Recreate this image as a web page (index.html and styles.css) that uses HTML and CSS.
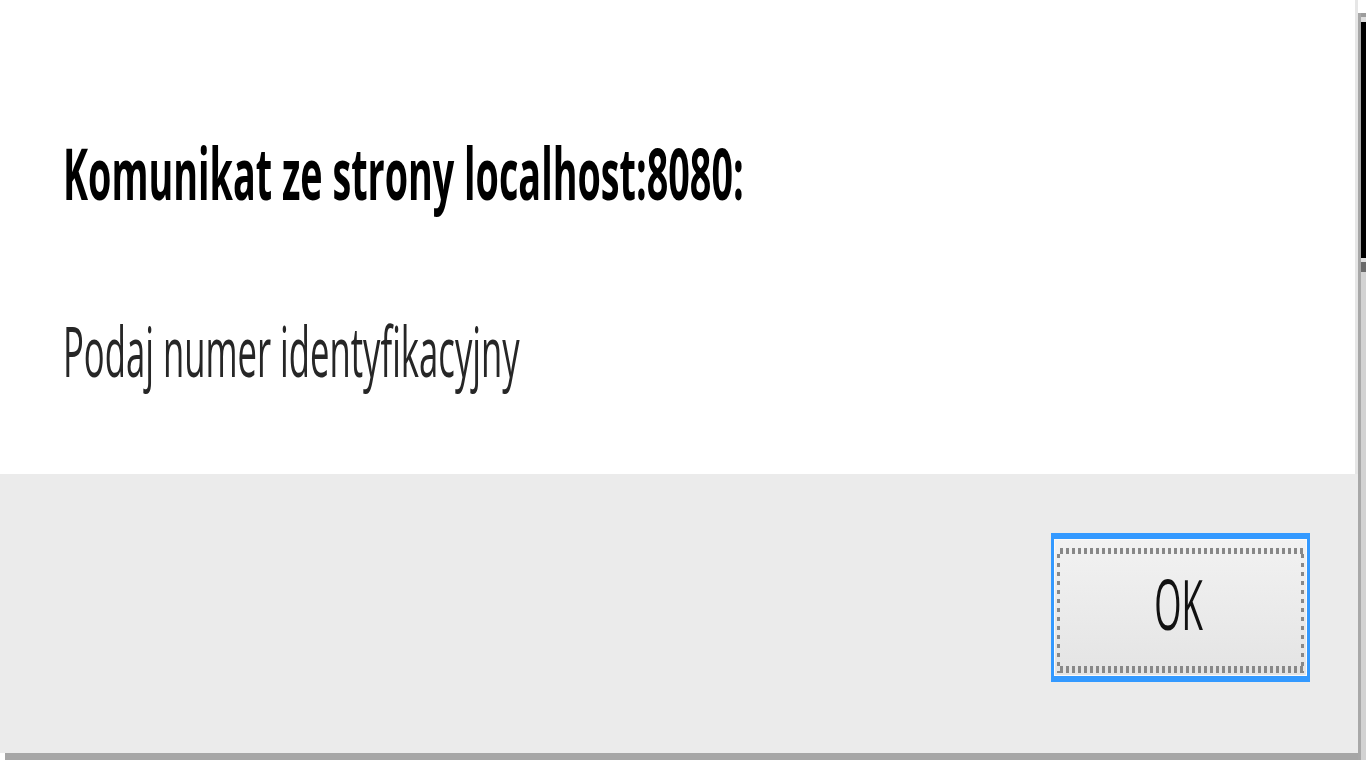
FILE: index.html
```html
<!DOCTYPE html>
<html lang="pl">
<head>
<meta charset="utf-8">
<title>Komunikat</title>
<link rel="stylesheet" href="styles.css">
</head>
<body>
<div class="frame">
  <div class="dialog-col">
    <div class="dialog">
      <div class="content">
        <div class="title-line"><span class="title">Komunikat ze strony localhost:8080:</span></div>
        <div class="message-line"><span class="message">Podaj numer identyfikacyjny</span></div>
      </div>
      <div class="footer">
        <button class="ok-btn" type="button"><span class="focus"><span class="ok-label">OK</span></span></button>
      </div>
    </div>
    <div class="shadow-bottom"></div>
  </div>
  <div class="shadow-right"></div>
  <div class="behind">
    <div class="bh-top"></div>
    <div class="bh-light"></div>
    <div class="bh-black"></div>
    <div class="bh-light2"></div>
    <div class="bh-dark"></div>
    <div class="bh-rest"></div>
  </div>
</div>
</body>
</html>
```

FILE: styles.css
```css
* { box-sizing: border-box; }

html, body {
  margin: 0;
  padding: 0;
  background: #ffffff;
  width: 1366px;
  height: 768px;
  overflow: hidden;
  font-family: "Open Sans", "Noto Sans", "Liberation Sans", sans-serif;
}

.frame {
  display: flex;
  width: 1366px;
  height: 768px;
}

.dialog-col {
  width: 1358px;
  display: flex;
  flex-direction: column;
}

.dialog {
  height: 753px;
  display: flex;
  flex-direction: column;
}

.content {
  height: 474px;
  background: #ffffff;
  border-right: 3px solid #e6e6e6;
  padding: 138px 0 0 63px;
  display: flex;
  flex-direction: column;
}

.title-line {
  height: 72px;
}

.title {
  display: inline-block;
  font-weight: 700;
  font-size: 36px;
  line-height: 36px;
  color: #000000;
  white-space: nowrap;
  transform: scale(1.048, 2);
  transform-origin: 0 0;
}

.message-line {
  margin-top: 105px;
  height: 70px;
}

.message {
  display: inline-block;
  font-weight: 400;
  font-size: 35px;
  line-height: 35px;
  color: #262626;
  white-space: nowrap;
  transform: scale(0.99, 2);
  transform-origin: 0 0;
}

.footer {
  flex: 1;
  background: #ebebeb;
  display: flex;
  justify-content: flex-end;
  align-items: flex-start;
  padding: 59px 48px 0 0;
}

.ok-btn {
  width: 259px;
  height: 149px;
  border-style: solid;
  border-color: #3399ff;
  border-width: 6px 3px;
  background: linear-gradient(#f2f2f2, #e4e4e4);
  box-shadow: inset 1px 1px 0 #fafafa, inset -1px -1px 0 #fafafa;
  padding: 9px 3px 3px 3px;
  margin: 0;
  display: flex;
  font-family: inherit;
}

.focus {
  flex: 1;
  height: 100%;
  display: flex;
  align-items: center;
  justify-content: center;
  background-image:
    repeating-linear-gradient(90deg, #888888 0 3px, transparent 3px 6px),
    repeating-linear-gradient(90deg, #888888 0 3px, transparent 3px 6px),
    repeating-linear-gradient(180deg, #888888 0 4px, transparent 4px 9px),
    repeating-linear-gradient(180deg, #888888 0 4px, transparent 4px 9px);
  background-size: 100% 6px, 100% 7px, 3px 100%, 3px 100%;
  background-position: 3px 0, 3px 100%, 0 6px, 100% 6px;
  background-repeat: no-repeat;
}

.ok-label {
  display: inline-block;
  font-weight: 400;
  font-size: 35px;
  line-height: 35px;
  color: #111111;
  transform: translate(-2px, -8px) scale(1, 2);
}

.shadow-bottom {
  height: 7px;
  margin-left: 5px;
  background: #a6a6a6;
}

.shadow-right {
  width: 3px;
  margin-top: 13px;
  height: 747px;
  background: #a8a8a8;
}

.behind {
  width: 5px;
  margin-top: 13px;
  height: 747px;
  display: flex;
  flex-direction: column;
}

.bh-top { height: 4px; background: #9c9c9c; }
.bh-light { height: 5px; background: #dedede; }
.bh-black { height: 236px; background: #000000; }
.bh-light2 { height: 4px; background: #e0e0e0; }
.bh-dark { height: 10px; background: #6a6a6a; }
.bh-rest { flex: 1; background: #d2d2d2; }
```
